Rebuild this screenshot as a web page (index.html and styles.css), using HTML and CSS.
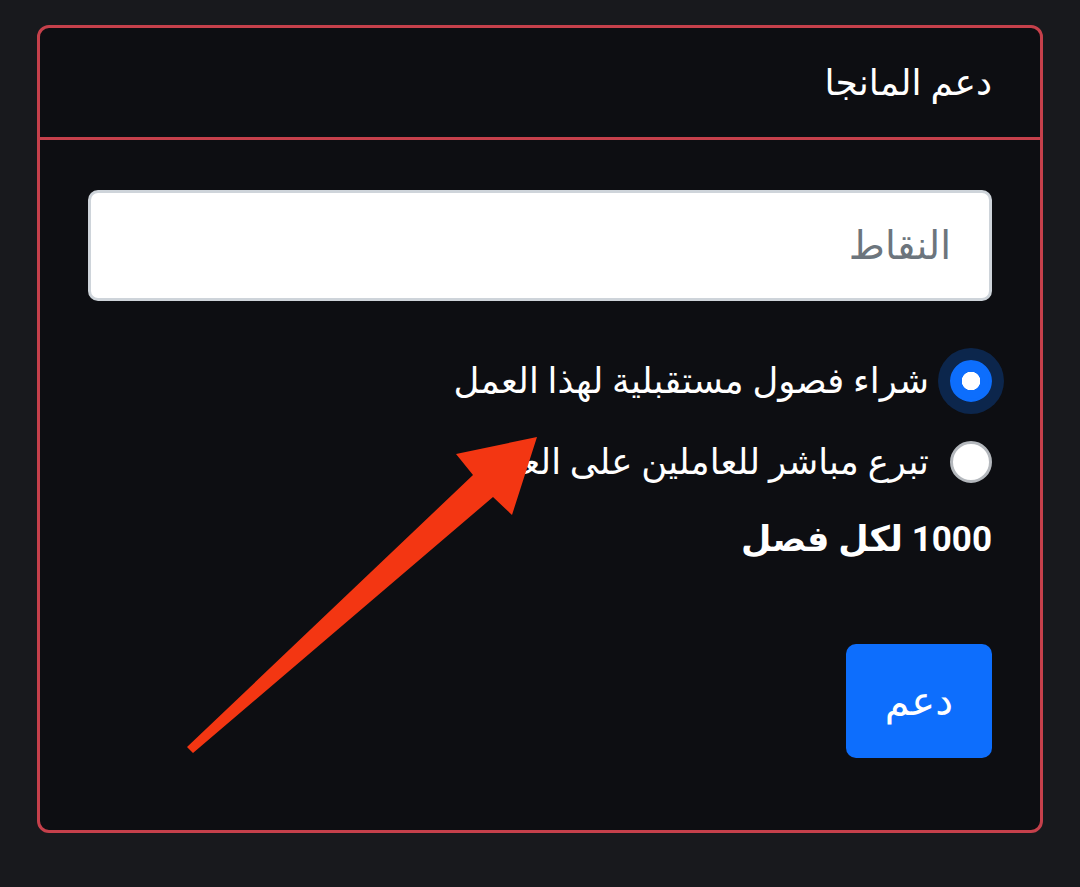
FILE: index.html
```html
<!DOCTYPE html>
<html lang="ar" dir="rtl">

<head>
	<meta charset="utf-8">
	<title>دعم المانجا</title>
	<link rel="stylesheet" href="styles.css">
</head>

<body>
	<div class="card">
		<div class="card-header">دعم المانجا</div>
		<div class="card-body">
			<input class="form-control" type="number" placeholder="النقاط">

			<div class="options">
				<label class="form-check">
					<input class="form-check-input focused" type="radio" name="type" checked>
					<span>شراء فصول مستقبلية لهذا العمل</span>
				</label>
				<label class="form-check">
					<input class="form-check-input" type="radio" name="type">
					<span>تبرع مباشر للعاملين على العمل</span>
				</label>
			</div>

			<p class="price">1000 لكل فصل</p>

			<div class="actions">
				<button class="btn">دعم</button>
			</div>
		</div>
	</div>

	<!-- annotation arrow drawn over the screenshot -->
	<svg class="arrow" width="1080" height="887" viewBox="0 0 1080 887">
		<polygon fill="#f33612" points="537,437 512,515 493,497 193,753 187,747 473,475 456,454" />
	</svg>
</body>

</html>
```

FILE: styles.css
```css
* {
	box-sizing: border-box;
}

body {
	margin: 0;
	padding: 25px 37px 55px;
	background-color: #18191d;
	font-family: Roboto, "DejaVu Sans", sans-serif;
	color: #fff;
	position: relative;
}

.card {
	border: 3px solid #c5404b;
	border-radius: 12px;
	background-color: #0d0e12;
}

.card-header {
	padding: 24px 48px 22px;
	font-size: 36px;
	line-height: 63px;
	border-bottom: 3px solid #c5404b;
}

.card-body {
	padding: 50px 48px 72px;
	display: flex;
	flex-direction: column;
}

.form-control {
	height: 111px;
	width: 100%;
	padding: 0 38px;
	border: 3px solid #ced4da;
	border-radius: 10px;
	background-color: #fff;
	font-family: inherit;
	font-size: 39px;
	color: #212529;
	outline: none;
}

.form-control::placeholder {
	color: #6c757d;
}

.options {
	margin-top: 48px;
	display: flex;
	flex-direction: column;
	gap: 18px;
}

.form-check {
	display: flex;
	align-items: center;
	gap: 21px;
	height: 63px;
	font-size: 35.5px;
}

.form-check-input {
	appearance: none;
	margin: 0;
	width: 42px;
	height: 42px;
	flex: none;
	border-radius: 50%;
	border: 3px solid #b4b8bd;
	background-color: #fff;
}

.form-check-input:checked {
	border-color: #0d6efd;
	background: radial-gradient(circle, #fff 0 9px, #0d6efd 9.5px);
}

.focused {
	box-shadow: 0 0 0 12px rgba(13, 110, 253, .25);
}

.price {
	margin: 15px 0 0;
	font-size: 35px;
	font-weight: bold;
	line-height: 63px;
}

.actions {
	margin-top: 73px;
	display: flex;
}

.btn {
	height: 114px;
	padding: 0 39px;
	border: none;
	border-radius: 10px;
	background-color: #0d6efd;
	color: #fff;
	font-family: inherit;
	font-size: 40px;
}

.arrow {
	position: absolute;
	top: 0;
	left: 0;
	pointer-events: none;
}
```
